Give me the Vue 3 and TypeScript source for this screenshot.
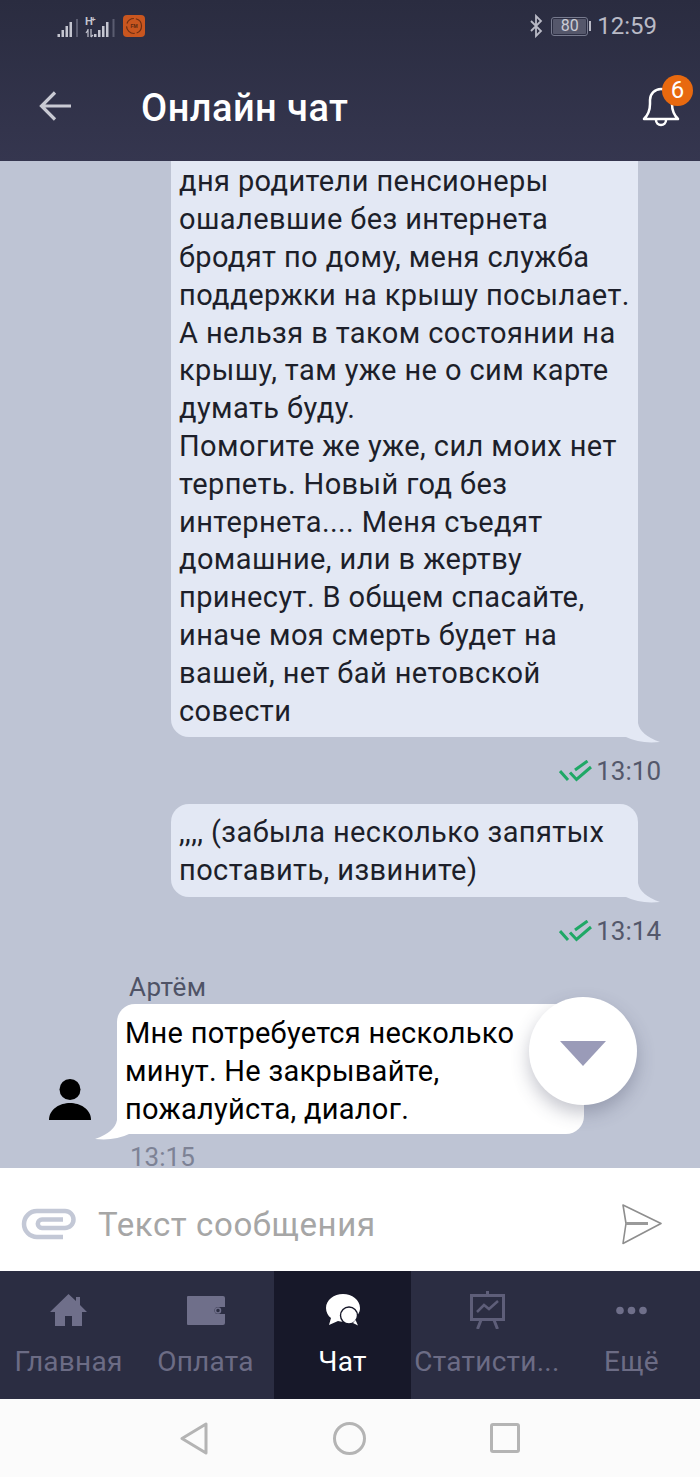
<template>
  <div class="screen">
    <header class="top">
      <div class="status">
        <svg class="sig" width="22" height="24" viewBox="0 0 22 24">
          <rect x="0.5" y="20" width="2.5" height="3" fill="#c4c5d0" />
          <rect x="4.5" y="16" width="2.5" height="7" fill="#c4c5d0" />
          <rect x="8.5" y="12" width="2.5" height="11" fill="#c4c5d0" />
          <rect x="12.5" y="8" width="2.5" height="15" fill="#c4c5d0" />
          <rect x="19" y="5" width="2" height="18" fill="#5a5c70" />
        </svg>
        <svg class="sig2" width="31" height="24" viewBox="0 0 31 24">
          <text x="0" y="11" class="net">H</text>
          <text x="6" y="8" class="net-small">+</text>
          <path d="M3 15v8M6 15v8M1 19l2-3M8 21l-2 2" stroke="#c4c5d0" stroke-width="1.2" fill="none" />
          <rect x="9" y="20" width="2.5" height="3" fill="#c4c5d0" />
          <rect x="13" y="16" width="2.5" height="7" fill="#c4c5d0" />
          <rect x="17" y="12" width="2.5" height="11" fill="#c4c5d0" />
          <rect x="21" y="8" width="2.5" height="15" fill="#c4c5d0" />
          <rect x="27.5" y="5" width="2" height="18" fill="#5a5c70" />
        </svg>
        <div class="fm">
          <svg width="22" height="22" viewBox="0 0 22 22">
            <circle cx="11" cy="11" r="7.5" fill="none" stroke="#6e2f12" stroke-width="1.2" stroke-dasharray="9 2 12 3" />
            <text x="11" y="13" text-anchor="middle" class="fm-text">FM</text>
          </svg>
        </div>
        <div class="status-right">
          <svg width="14" height="24" viewBox="0 0 14 24">
            <path d="M2 7l10 10-5 5V2l5 5L2 17" fill="none" stroke="#b9bac6" stroke-width="1.8" />
          </svg>
          <div class="battery"><span>80</span></div>
          <div class="nub"></div>
          <span class="clock">12:59</span>
        </div>
      </div>
      <div class="bar">
        <svg class="back" width="32" height="30" viewBox="0 0 32 30">
          <path d="M32 15H3M16 1.5L2.5 15 16 28.5" fill="none" stroke="#c9cad3" stroke-width="3.2" />
        </svg>
        <h1>Онлайн чат</h1>
        <div class="bell">
          <svg width="40" height="44" viewBox="0 0 40 44">
            <path d="M3 33Q9 27 9 18V14A11 11 0 0 1 31 14V18Q31 27 37 33Z" fill="none" stroke="#fff" stroke-width="2.5" stroke-linejoin="round" />
            <path d="M15 34a5 5 0 0 0 10 0" fill="none" stroke="#fff" stroke-width="2.5" />
          </svg>
          <span class="badge">6</span>
        </div>
      </div>
    </header>

    <main class="chat">
      <template v-for="m in messages" :key="m.time">
        <div v-if="m.author" class="author">{{ m.author }}</div>
        <div class="row" :class="m.author ? 'row-in' : 'row-out'">
          <svg v-if="m.author" class="avatar" width="44" height="42" viewBox="0 0 44 42">
            <circle cx="22" cy="10.5" r="10.5" fill="#000" />
            <path d="M1 41C1 30 12 24 22 24S43 30 43 41Z" fill="#000" />
          </svg>
          <div class="bubble" :class="m.author ? 'bubble-in' : 'bubble-out'">
            <div v-for="line in m.lines" :key="line" class="line">{{ line }}</div>
            <svg class="tail" width="40" height="30" viewBox="0 0 40 30">
              <path d="M22 0V10Q20 22 0 29Q20 31 34 24H40V0Z" />
            </svg>
          </div>
        </div>
        <div class="stamp" :class="m.author ? 'stamp-in' : 'stamp-out'">
          <svg v-if="!m.author" width="33" height="22" viewBox="0 0 33 22">
            <path d="M1 11l8 9M11 12.5l6.5 7L32 7M16 10L28.5 1" fill="none" stroke="#1fa866" stroke-width="3" />
          </svg>
          <span>{{ m.time }}</span>
        </div>
      </template>
      <button class="scroll-down">
        <svg width="46" height="25" viewBox="0 0 46 25"><path d="M0 0H46L23 25Z" fill="#9a9bb8" /></svg>
      </button>
    </main>

    <div class="composer">
      <svg width="56" height="32" viewBox="0 0 56 32">
        <path d="M42 29H16A13 13 0 0 1 16 3H44A8.5 8.5 0 0 1 44 20H21A4.2 4.2 0 0 1 21 11.6H42" fill="none" stroke="#c3c8d6" stroke-width="4.5" />
      </svg>
      <span class="placeholder">Текст сообщения</span>
      <svg class="send" width="40" height="41" viewBox="0 0 40 41">
        <path d="M1 1L39 19.5 1 39.5 4 19.5Z" fill="none" stroke="#8e8e8e" stroke-width="1.6" stroke-linejoin="round" />
        <path d="M4 19.5H26" stroke="#9a9a9a" stroke-width="3" />
      </svg>
    </div>

    <nav class="tabs">
      <div v-for="t in tabs" :key="t.label" class="tab" :class="{ active: t.id === 'chat' }">
        <div class="tab-icon">
          <svg v-if="t.id === 'home'" width="37" height="32" viewBox="0 0 37 32">
            <path d="M18.5 0L26 7V3H30V11L37 18H32V32H22V22H15V32H5V18H0Z" fill="#6f6f8a" />
          </svg>
          <svg v-else-if="t.id === 'pay'" width="38" height="29" viewBox="0 0 38 29">
            <path d="M1 0H36Q38 0 38 2V11H31a3.5 3.5 0 0 0 0 7H38V27Q38 29 36 29H1Q0 29 0 28V1Q0 0 1 0Z" fill="#6f6f8a" />
            <circle cx="31" cy="14.5" r="2.5" fill="none" stroke="#6f6f8a" stroke-width="1.5" />
          </svg>
          <svg v-else-if="t.id === 'chat'" width="34" height="32" viewBox="0 0 34 32">
            <path d="M17 0C26 0 34 6 34 14C34 19 31 22 28 24L27 30L22 27C18 28 15 28 12 27L3 31L5 24C2 22 0 18 0 14C0 6 8 0 17 0Z" fill="#fff" />
            <circle cx="23" cy="21.5" r="8.5" fill="#fff" stroke="#171829" stroke-width="1.4" />
            <path d="M27 29L32 31.5L29.5 26Z" fill="#fff" />
          </svg>
          <svg v-else-if="t.id === 'stats'" width="35" height="38" viewBox="0 0 35 38">
            <path d="M17.5 0V4M1.5 4.5H33.5V28.5H1.5ZM11 29L7.5 38M24 29L27.5 38" fill="none" stroke="#5e5e79" stroke-width="3" />
            <path d="M7 21L14 14L19 18L28 10" fill="none" stroke="#5e5e79" stroke-width="2.5" />
          </svg>
          <svg v-else width="31" height="9" viewBox="0 0 31 9">
            <circle cx="4" cy="4.5" r="3.8" fill="#6f6f8a" />
            <circle cx="15.5" cy="4.5" r="3.8" fill="#6f6f8a" />
            <circle cx="27" cy="4.5" r="3.8" fill="#6f6f8a" />
          </svg>
        </div>
        <span class="tab-label">{{ t.label }}</span>
      </div>
    </nav>

    <div class="system-nav">
      <svg width="28" height="33" viewBox="0 0 28 33"><path d="M26 2V31L2 16.5Z" fill="none" stroke="#b4b4b4" stroke-width="3" stroke-linejoin="round" /></svg>
      <svg width="33" height="33" viewBox="0 0 33 33"><circle cx="16.5" cy="16.5" r="15" fill="none" stroke="#b4b4b4" stroke-width="3" /></svg>
      <svg width="30" height="30" viewBox="0 0 30 30"><rect x="1.5" y="1.5" width="27" height="27" rx="1.5" fill="none" stroke="#b4b4b4" stroke-width="3" /></svg>
    </div>
  </div>
</template>

<script setup lang="ts">
interface Message {
  author?: string
  lines: string[]
  time: string
}

const messages: Message[] = [
  {
    lines: [
      'дня родители пенсионеры',
      'ошалевшие без интернета',
      'бродят по дому, меня служба',
      'поддержки на крышу посылает.',
      'А нельзя в таком состоянии на',
      'крышу, там уже не о сим карте',
      'думать буду.',
      'Помогите же уже, сил моих нет',
      'терпеть. Новый год без',
      'интернета.... Меня съедят',
      'домашние, или в жертву',
      'принесут. В общем спасайте,',
      'иначе моя смерть будет на',
      'вашей, нет бай нетовской',
      'совести',
    ],
    time: '13:10',
  },
  {
    lines: [',,,, (забыла несколько запятых', 'поставить, извините)'],
    time: '13:14',
  },
  {
    author: 'Артём',
    lines: ['Мне потребуется несколько', 'минут. Не закрывайте,', 'пожалуйста, диалог.'],
    time: '13:15',
  },
]

const tabs = [
  { id: 'home', label: 'Главная' },
  { id: 'pay', label: 'Оплата' },
  { id: 'chat', label: 'Чат' },
  { id: 'stats', label: 'Статисти...' },
  { id: 'more', label: 'Ещё' },
]
</script>

<style scoped>
.screen {
  width: 700px;
  height: 1477px;
  display: flex;
  flex-direction: column;
  font-family: Roboto, "Liberation Sans", sans-serif;
  overflow: hidden;
}

.top {
  position: relative;
  z-index: 1;
  height: 161px;
  flex-shrink: 0;
  background: linear-gradient(#2a2c40, #35364f);
}

.status {
  height: 52px;
  display: flex;
  align-items: center;
  padding: 0 43px 0 57px;
}

.sig2 {
  margin-left: 6px;
}

.net {
  font: 700 11px "Liberation Sans", sans-serif;
  fill: #c4c5d0;
}

.net-small {
  font: 700 8px "Liberation Sans", sans-serif;
  fill: #c4c5d0;
}

.fm {
  width: 22px;
  height: 22px;
  margin-left: 7px;
  border-radius: 4px;
  background: #c9561f;
  display: flex;
}

.fm-text {
  font: 700 5px "Liberation Sans", sans-serif;
  fill: #5c2810;
}

.status-right {
  margin-left: auto;
  display: flex;
  align-items: center;
}

.battery {
  width: 37px;
  height: 19px;
  margin-left: 8px;
  box-sizing: border-box;
  border: 1.5px solid #777a8e;
  border-radius: 3px;
  padding: 1px;
  display: flex;
}

.battery span {
  flex: 1;
  background: #55576b;
  border-radius: 1px;
  color: #cbccd5;
  font-size: 16px;
  line-height: 14px;
  text-align: center;
}

.nub {
  width: 2px;
  height: 10px;
  margin-left: 1px;
  background: #b9bac6;
}

.clock {
  margin-left: 6px;
  color: #b9bac6;
  font-size: 24px;
}

.bar {
  height: 109px;
  box-sizing: border-box;
  display: flex;
  align-items: center;
  padding: 2px 4px 0 39px;
}

.back {
  margin-top: -4px;
}

.bar h1 {
  margin: 0 0 0 70px;
  color: #fff;
  font-size: 38px;
  font-weight: 500;
  letter-spacing: 0.45px;
}

.bell {
  position: relative;
  margin-left: auto;
  margin-right: 15px;
  display: flex;
}

.badge {
  position: absolute;
  left: 21px;
  top: -11px;
  width: 31px;
  height: 31px;
  border-radius: 50%;
  background: #e8690f;
  color: #fff;
  font-size: 24px;
  line-height: 31px;
  text-align: center;
}

.chat {
  position: relative;
  flex: 1;
  min-height: 0;
  display: flex;
  flex-direction: column;
  justify-content: flex-end;
  overflow: hidden;
  background: #bec4d4;
}

.row {
  display: flex;
  flex-shrink: 0;
}

.row-out {
  justify-content: flex-end;
  padding-right: 62px;
}

.row-in {
  align-items: flex-end;
  padding-left: 48px;
}

/* the first message is scrolled under the header, its top corners stay out of view */
.row:first-child .bubble {
  padding-top: 50px;
}

.bubble {
  position: relative;
  width: 467px;
  box-sizing: border-box;
  border-radius: 18px;
  padding: 10px 8px 7px;
  color: #1d1f2a;
  font-size: 29px;
  line-height: 37.8px;
  letter-spacing: 0.4px;
  white-space: nowrap;
}

.line {
  position: relative;
  z-index: 1;
}

.bubble-out {
  background: #e3e8f4;
  fill: #e3e8f4;
}

.bubble-in {
  margin-left: 25px;
  padding: 11px 8px 5.6px;
  background: #fff;
  fill: #fff;
  color: #000;
  letter-spacing: 0.27px;
}

.tail {
  position: absolute;
  bottom: -6px;
  left: -22px;
}

.bubble-out .tail {
  left: auto;
  right: -22px;
  transform: scaleX(-1);
}

.avatar {
  margin-bottom: 13px;
}

.stamp {
  flex-shrink: 0;
  font-size: 26px;
}

.stamp-out {
  height: 30px;
  line-height: 30px;
  margin: 19px 39px 18px 0;
  display: flex;
  justify-content: flex-end;
  align-items: center;
  gap: 4px;
  color: #54586b;
}

.stamp-in {
  height: 22px;
  line-height: 22px;
  margin: 12px 0 0 130px;
  color: #7d8295;
}

.author {
  flex-shrink: 0;
  margin: 8px 0 2px 129px;
  color: #4f5366;
  font-size: 26px;
  line-height: 30px;
  letter-spacing: 0.5px;
}

.scroll-down {
  position: absolute;
  z-index: 2;
  left: 529px;
  bottom: 63px;
  width: 108px;
  height: 108px;
  padding: 8px 0 0;
  border: 0;
  border-radius: 50%;
  background: #fff;
  box-shadow: 0 8px 18px rgba(60, 64, 90, 0.3);
}

.composer {
  height: 103px;
  flex-shrink: 0;
  box-sizing: border-box;
  background: #fff;
  display: flex;
  align-items: center;
  padding: 9px 38px 0 21px;
}

.placeholder {
  margin-left: 21px;
  color: #a6a6a6;
  font-size: 33px;
  letter-spacing: 0.6px;
}

.send {
  margin-left: auto;
}

.tabs {
  height: 128px;
  flex-shrink: 0;
  background: #2b2d42;
  display: grid;
  grid-template-columns: 137px 137px 137px 152px 137px;
}

.tab {
  display: flex;
  flex-direction: column;
  align-items: center;
  padding-top: 19px;
  color: #6c6c85;
}

.tab.active {
  background: #171829;
  color: #fff;
}

.tab-icon {
  height: 40px;
  display: flex;
  align-items: center;
}

.tab-label {
  margin-top: 16px;
  font-size: 28px;
  line-height: 32px;
  letter-spacing: 0.25px;
  white-space: nowrap;
}

.system-nav {
  height: 78px;
  flex-shrink: 0;
  background: #fbfbfb;
  display: flex;
  align-items: center;
  padding: 0 180px;
  justify-content: space-between;
}
</style>

<style>
html,
body {
  margin: 0;
  background: #fff;
}
</style>
